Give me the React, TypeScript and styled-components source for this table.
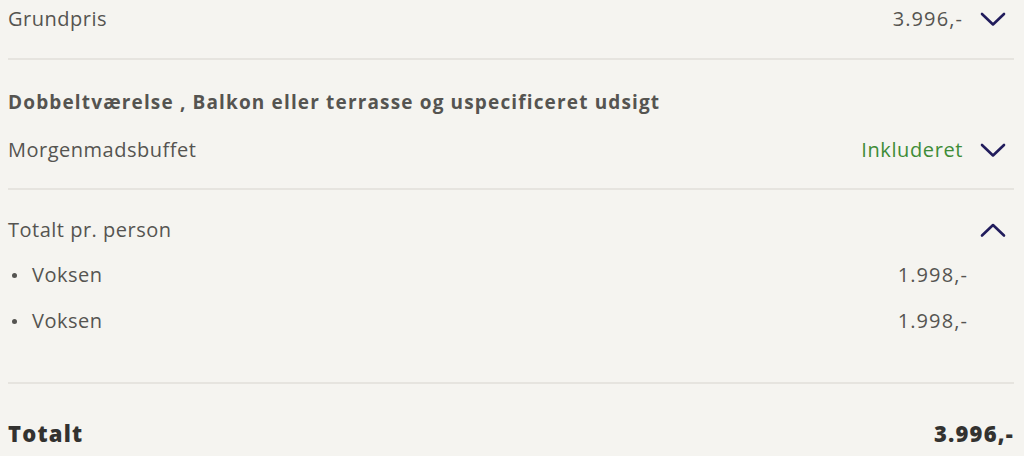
import styled, { createGlobalStyle } from 'styled-components';

const GlobalStyle = createGlobalStyle`
  html, body {
    margin: 0;
    background: #f5f4f0;
  }
  body {
    font-family: "Open Sans", "Liberation Sans", sans-serif;
    color: #555451;
  }
`;

type Direction = 'up' | 'down';

function Chevron({ dir }: { dir: Direction }) {
  const d = dir === 'down' ? 'M2 2 L13 12.5 L24 2' : 'M2 12.5 L13 2 L24 12.5';
  return (
    <ChevronBox>
      <svg width="26" height="15" viewBox="0 0 26 15" fill="none">
        <path d={d} stroke="#211c5c" strokeWidth="2.6" strokeLinecap="round" strokeLinejoin="round" />
      </svg>
    </ChevronBox>
  );
}

export default function App() {
  const travellers = [
    { label: 'Voksen', price: '1.998,-' },
    { label: 'Voksen', price: '1.998,-' }
  ];

  return (
    <>
      <GlobalStyle />
      <Summary>
        <Section $top={0} $bottom={20}>
          <Row>
            <Label>Grundpris</Label>
            <Trailing>
              <Price>3.996,-</Price>
              <Chevron dir="down" />
            </Trailing>
          </Row>
        </Section>

        <Section $top={30} $bottom={19}>
          <RoomTitle>Dobbeltværelse , Balkon eller terrasse og uspecificeret udsigt</RoomTitle>
          <Row>
            <Label>Morgenmadsbuffet</Label>
            <Trailing>
              <Price $included>Inkluderet</Price>
              <Chevron dir="down" />
            </Trailing>
          </Row>
        </Section>

        <Section $top={21} $bottom={38}>
          <Row>
            <Label>Totalt pr. person</Label>
            <Trailing>
              <Chevron dir="up" />
            </Trailing>
          </Row>
          <TravellerList>
            {travellers.map((t, i) => (
              <Traveller key={i}>
                <Label>{t.label}</Label>
                <Price>{t.price}</Price>
              </Traveller>
            ))}
          </TravellerList>
        </Section>

        <TotalRow>
          <span>Totalt</span>
          <span>3.996,-</span>
        </TotalRow>
      </Summary>
    </>
  );
}

const Summary = styled.div`
  padding: 0 10px 0 8px;
`;

const Section = styled.section<{ $top: number; $bottom: number }>`
  padding-top: ${(p) => p.$top}px;
  padding-bottom: ${(p) => p.$bottom}px;
  border-bottom: 2px solid #e6e4df;
`;

const Row = styled.div`
  display: flex;
  align-items: center;
  justify-content: space-between;
  height: 38px;
`;

const Label = styled.span`
  font-size: 20px;
  line-height: 24px;
  letter-spacing: 0.5px;
`;

const Trailing = styled.div`
  display: flex;
  align-items: center;
  gap: 17px;
  padding-right: 8px;
`;

const Price = styled.span<{ $included?: boolean }>`
  font-size: 20px;
  line-height: 24px;
  letter-spacing: ${(p) => (p.$included ? '0.6px' : '1.1px')};
  color: ${(p) => (p.$included ? '#3e8c37' : '#555451')};
`;

const ChevronBox = styled.span`
  display: inline-flex;
  width: 26px;
  justify-content: center;
`;

const RoomTitle = styled.h3`
  margin: 0 0 17px;
  font-size: 19px;
  line-height: 24px;
  font-weight: 700;
  letter-spacing: 1.15px;
  color: #555451;
`;

const TravellerList = styled.ul`
  list-style: none;
  margin: 0;
  padding: 3px 0 0;
`;

const Traveller = styled.li`
  display: flex;
  align-items: center;
  justify-content: space-between;
  height: 46px;
  padding-right: 46px;

  ${Label} {
    display: flex;
    align-items: center;
  }

  ${Label}::before {
    content: '';
    width: 5px;
    height: 5px;
    border-radius: 50%;
    background: #555451;
    margin: 0 15px 0 4px;
  }
`;

const TotalRow = styled.div`
  display: flex;
  align-items: center;
  justify-content: space-between;
  height: 98px;
  font-size: 22px;
  font-weight: 800;
  letter-spacing: 1.2px;
  color: #333230;
`;
